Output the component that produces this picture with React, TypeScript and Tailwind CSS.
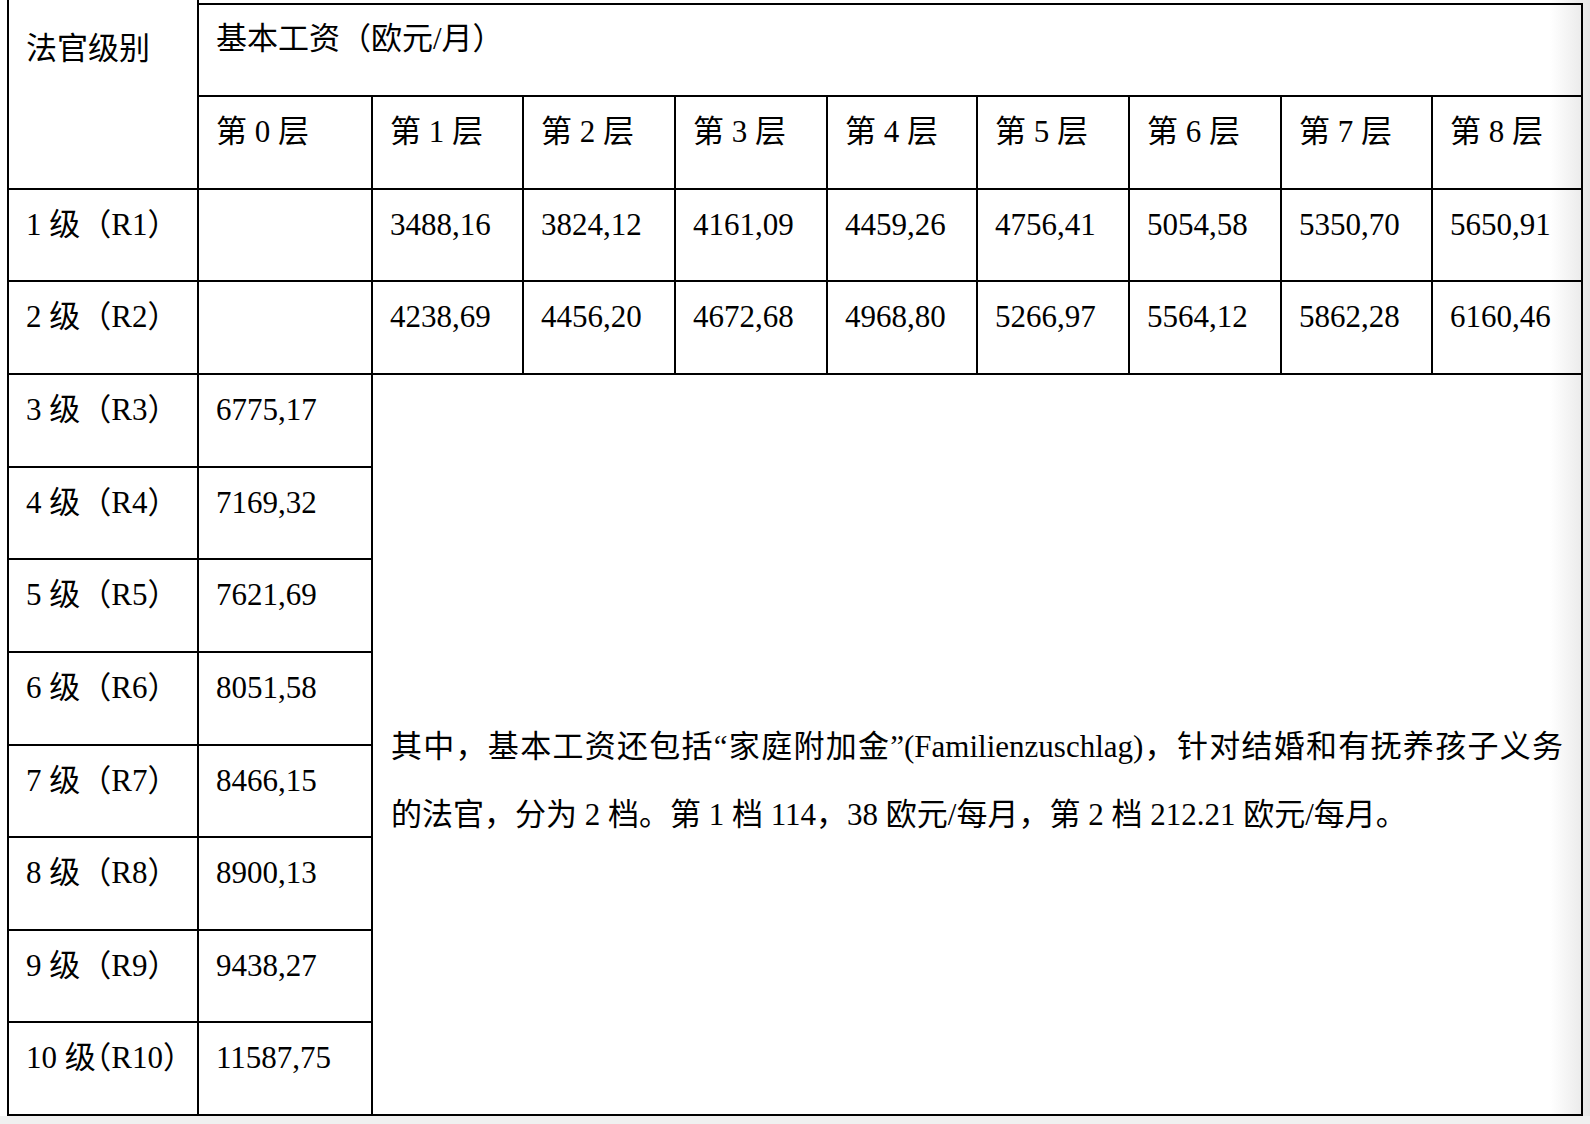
import React from "react";

const LEVELS = ["第 0 层", "第 1 层", "第 2 层", "第 3 层", "第 4 层", "第 5 层", "第 6 层", "第 7 层", "第 8 层"];

const TOP_ROWS = [
  { label: "1 级（R1）", values: ["3488,16", "3824,12", "4161,09", "4459,26", "4756,41", "5054,58", "5350,70", "5650,91"] },
  { label: "2 级（R2）", values: ["4238,69", "4456,20", "4672,68", "4968,80", "5266,97", "5564,12", "5862,28", "6160,46"] },
];

const LOWER_ROWS = [
  { label: "3 级（R3）", value: "6775,17" },
  { label: "4 级（R4）", value: "7169,32" },
  { label: "5 级（R5）", value: "7621,69" },
  { label: "6 级（R6）", value: "8051,58" },
  { label: "7 级（R7）", value: "8466,15" },
  { label: "8 级（R8）", value: "8900,13" },
  { label: "9 级（R9）", value: "9438,27" },
  { label: "10 级（R10）", value: "11587,75", tight: true },
];

const cell = "border-r-2 border-b-2 border-black pl-[17px] pt-[12px] whitespace-nowrap";

export default function App() {
  return (
    <div className="w-[1590px] h-[1124px] overflow-hidden flex flex-col bg-[linear-gradient(to_right,#ffffff_1550px,#e6e6e6_1590px)] text-black font-['Liberation_Serif','Noto_Sans_CJK_SC',serif] text-[31px] leading-[46px]">
      <div className="ml-[7px] w-max border-l-2 border-black grid grid-cols-[190px_174px_151px_152px_152px_150px_152px_152px_151px_150px] grid-rows-[97px_93px_92px_93px_repeat(8,92.625px)]">
        {/* header */}
        <div className="row-span-2 border-r-2 border-b-2 border-black pl-[17px] pt-[26px]">法官级别</div>
        <div className="col-span-9 mt-[3px] border-t-2 border-r-2 border-b-2 border-black pl-[17px] pt-[11px]">
          基本工资（欧元/月）
        </div>
        {LEVELS.map((l) => (
          <div key={l} className={cell}>
            {l}
          </div>
        ))}

        {/* R1 - R2 */}
        {TOP_ROWS.map((r) => (
          <React.Fragment key={r.label}>
            <div className={cell}>{r.label}</div>
            <div className={cell}></div>
            {r.values.map((v, i) => (
              <div key={i} className={cell}>
                {v}
              </div>
            ))}
          </React.Fragment>
        ))}

        {/* R3 - R10 + note */}
        {LOWER_ROWS.map((r, i) => (
          <React.Fragment key={r.label}>
            <div className={r.tight ? `${cell} [font-feature-settings:'halt']` : cell}>{r.label}</div>
            <div className={cell}>{r.value}</div>
            {i === 0 && (
              <div className="col-span-8 row-span-8 border-r-2 border-b-2 border-black pl-[18px] pr-[18px] pt-[338px] leading-[68px]">
                <div className="whitespace-nowrap text-justify [text-align-last:justify]">
                  其中，基本工资还包括“家庭附加金”(Familienzuschlag)，针对结婚和有抚养孩子义务
                </div>
                <div className="whitespace-nowrap">
                  的法官，分为 2 档。第 1 档 114，38 欧元/每月，第 2 档 212.21 欧元/每月。
                </div>
              </div>
            )}
          </React.Fragment>
        ))}
      </div>
      <div className="flex-1 bg-[#f0f0f0]"></div>
    </div>
  );
}
